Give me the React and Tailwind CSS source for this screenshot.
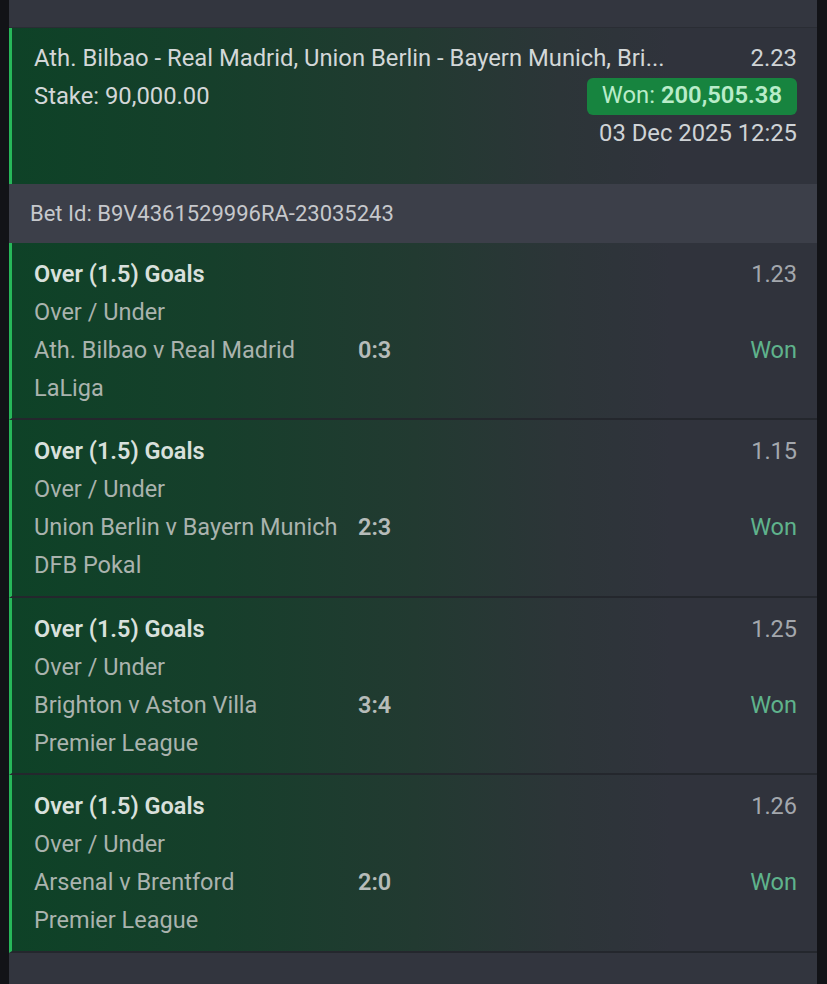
import React from "react";

const rows = [
  { odds: "1.23", match: "Ath. Bilbao v Real Madrid", score: "0:3", league: "LaLiga" },
  { odds: "1.15", match: "Union Berlin v Bayern Munich", score: "2:3", league: "DFB Pokal" },
  { odds: "1.25", match: "Brighton v Aston Villa", score: "3:4", league: "Premier League" },
  { odds: "1.26", match: "Arsenal v Brentford", score: "2:0", league: "Premier League" },
];

function Row({ r }) {
  return (
    <div className="flex border-l-[3px] border-[#27b85a] border-b-[2px] border-b-[#24272d] bg-[linear-gradient(90deg,#0e4227_0%,#163f2b_25%,#223a31_50%,#2c3538_68%,#30333c_82%,#30333c_100%)] pl-[22px] pr-[20px] pt-[12px] pb-[11.5px] text-[23.5px] leading-[38px]">
      <div className="flex-1">
        <div className="font-semibold text-[#d9e0dc]">Over (1.5) Goals</div>
        <div className="text-[#aab3ae]">Over / Under</div>
        <div className="flex">
          <div className="w-[324px] whitespace-nowrap text-[#aab3ae]">{r.match}</div>
          <div className="font-semibold text-[#b6bcb9]">{r.score}</div>
        </div>
        <div className="text-[#aab3ae]">{r.league}</div>
      </div>
      <div className="flex flex-col items-end">
        <div className="text-[#a3a7ad]">{r.odds}</div>
        <div>&nbsp;</div>
        <div className="text-[#5fb38c]">Won</div>
      </div>
    </div>
  );
}

export default function App() {
  return (
    <div className="min-h-[984px] w-[827px] bg-[#121317] font-['Roboto',sans-serif]">
      <div className="ml-[9px] w-[808px] min-h-[984px] bg-[#31343d]">
        <div className="h-[28px] border-b border-[#2a2d34] bg-[#33363f]" />
        <div className="border-l-[3px] border-[#27b85a] bg-[linear-gradient(90deg,#0e4227_0%,#163f2b_25%,#223a31_50%,#2c3538_68%,#30333c_82%,#30333c_100%)] pl-[22px] pr-[20px] pt-[12px] pb-[31px] text-[23.8px] leading-[37.5px] text-[#d3d7d8]">
          <div className="flex justify-between whitespace-nowrap">
            <div>Ath. Bilbao - Real Madrid, Union Berlin - Bayern Munich, Bri...</div>
            <div className="text-[#cfd3d6]">2.23</div>
          </div>
          <div className="flex justify-between">
            <div>Stake: 90,000.00</div>
            <div className="flex h-[37px] items-center rounded-[6px] bg-[#17843f] px-[15px] text-[#b9ecc9]">
              <span>Won:&nbsp;</span>
              <span className="font-semibold">200,505.38</span>
            </div>
          </div>
          <div className="flex justify-end text-[#cfd3d6]">03 Dec 2025 12:25</div>
        </div>
        <div className="flex h-[59px] items-center bg-[#3c3f49] pl-[21px] text-[22px] text-[#c6c8cc]">
          Bet Id: B9V4361529996RA-23035243
        </div>
        {rows.map((r, i) => (
          <Row key={i} r={r} />
        ))}
        <div className="h-[30px] bg-[#32353e]" />
      </div>
    </div>
  );
}
